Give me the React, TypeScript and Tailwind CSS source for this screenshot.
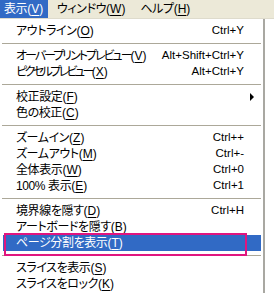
import type { ReactNode } from "react";

type Item =
  | { type: "sep" }
  | {
      type: "item";
      label: string;
      key: string;
      shortcut?: string;
      sub?: boolean;
      active?: boolean;
      tight?: string;
    };

const items: Item[] = [
  { type: "item", label: "アウトライン", key: "O", shortcut: "Ctrl+Y" },
  { type: "sep" },
  { type: "item", label: "オーバープリントプレビュー", key: "V", shortcut: "Alt+Shift+Ctrl+Y", tight: "tracking-[-2px]" },
  { type: "item", label: "ピクセルプレビュー", key: "X", shortcut: "Alt+Ctrl+Y", tight: "tracking-[-2.6px]" },
  { type: "sep" },
  { type: "item", label: "校正設定", key: "F", sub: true },
  { type: "item", label: "色の校正", key: "C" },
  { type: "sep" },
  { type: "item", label: "ズームイン", key: "Z", shortcut: "Ctrl++" },
  { type: "item", label: "ズームアウト", key: "M", shortcut: "Ctrl+-" },
  { type: "item", label: "全体表示", key: "W", shortcut: "Ctrl+0" },
  { type: "item", label: "100% 表示", key: "E", shortcut: "Ctrl+1" },
  { type: "sep" },
  { type: "item", label: "境界線を隠す", key: "D", shortcut: "Ctrl+H" },
  { type: "item", label: "アートボードを隠す", key: "B" },
  { type: "item", label: "ページ分割を表示", key: "T", active: true },
  { type: "sep" },
  { type: "item", label: "スライスを表示", key: "S" },
  { type: "item", label: "スライスをロック", key: "K" },
];

const Accel = ({ label, k, tight }: { label: string; k: string; tight?: string }): ReactNode => (
  <span className="whitespace-nowrap">
    <span className={tight ?? "tracking-[-0.4px]"}>{label}</span>
    (<span className="underline underline-offset-2">{k}</span>)
  </span>
);

export default function App() {
  return (
    <div className="relative w-[274px] h-[306px] overflow-hidden bg-white text-[12px] leading-none text-black [font-family:'Liberation_Sans','Noto_Sans_CJK_JP',sans-serif] [font-feature-settings:'palt']">
      {/* Menu bar */}
      <div className="flex h-[19px] bg-[#ECE9D8] border-b border-[#dedbcc]">
        <div className="flex h-[18px] w-[48px] items-center pl-[4px] bg-[#316AC5] text-white">
          <Accel label="表示" k="V" />
        </div>
        <div className="flex h-[18px] items-center pl-[9px]">
          <Accel label="ウィンドウ" k="W" />
        </div>
        <div className="flex h-[18px] items-center pl-[15px]">
          <Accel label="ヘルプ" k="H" />
        </div>
      </div>

      {/* Dropdown */}
      <div className="w-[265px] h-[274px] pt-[4px] border-r-2 border-[#a9a8a2] bg-white">
        {items.map((it, i) =>
          it.type === "sep" ? (
            <div key={i} className="h-[9px] flex items-center px-[2px]">
              <div className="h-px w-full bg-[#ACA899]" />
            </div>
          ) : (
            <div
              key={i}
              className={`relative flex h-[16px] items-center ml-[3px] mr-[2px] pl-[13px] pr-[17px] ${
                it.active ? "bg-[#316AC5] text-white" : ""
              }`}
            >
              <Accel label={it.label} k={it.key} tight={it.tight} />
              {it.shortcut && (
                <span className="ml-auto whitespace-nowrap text-[11.5px]">{it.shortcut}</span>
              )}
              {it.sub && (
                <span className="ml-auto mr-[-10px] h-0 w-0 border-y-[4px] border-l-[4px] border-y-transparent border-l-black" />
              )}
            </div>
          )
        )}
      </div>

      {/* Annotation box */}
      <div className="absolute left-[4px] top-[233px] w-[243px] h-[23px] border-2 border-[#E0157F]" />
    </div>
  );
}
